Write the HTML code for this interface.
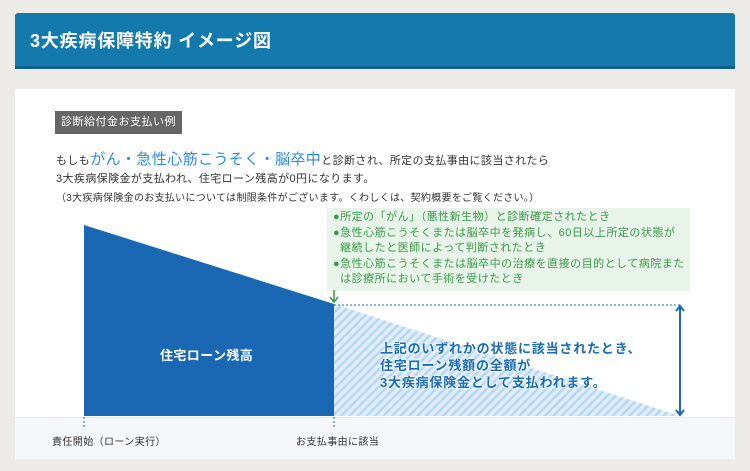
<!DOCTYPE html>
<html><head><meta charset="utf-8"><style>
body{margin:0;width:750px;height:471px;background:#ecebe7;font-family:"Liberation Sans","Noto Sans CJK JP",sans-serif;position:relative;overflow:hidden}
.hd{position:absolute;left:15px;top:13px;width:720px;height:53px;background:#1479ad;border-bottom:3px solid #0e5f8a;border-radius:3px 3px 0 0}
.hd span{position:absolute;left:15px;top:14px;color:#fff;font-size:18px;font-weight:bold;letter-spacing:0.8px}
.pn{position:absolute;left:15px;top:89px;width:720px;height:369px;background:#fff}
.ft{position:absolute;left:15px;top:417px;width:720px;height:41px;background:#f4f7fa;border-top:1px solid #e6e9ec}
.tag{position:absolute;left:55px;top:111px;background:#666;color:#fff;font-size:11px;padding:3px 6px;height:17px;line-height:17px;letter-spacing:0.5px}
.t{position:absolute;font-size:11px;color:#333;white-space:nowrap;letter-spacing:0.4px}
.gb{position:absolute;left:327px;top:208px;width:363px;height:83px;background:#e8f3e9;color:#3a9a47;font-size:11px;line-height:15.5px;padding:2px 0 0 6px;box-sizing:border-box;letter-spacing:0.5px;white-space:nowrap}
.blt{position:absolute;left:380px;top:340px;color:#1a6cb5;font-weight:bold;font-size:13px;line-height:17px;letter-spacing:0.8px;text-shadow:0 0 2px #fff,0 0 2px #fff,0 0 3px #fff;white-space:nowrap}
</style></head><body>
<div class="hd"><span>3大疾病保障特約 イメージ図</span></div>
<div class="pn"></div>
<div class="ft"></div>
<div class="tag">診断給付金お支払い例</div>
<div class="t" style="left:56px;top:148px">もしも<span style="color:#2b8be6;font-size:15px">がん・急性心筋こうそく・脳卒中</span>と診断され、所定の支払事由に該当されたら</div>
<div class="t" style="left:56px;top:170px">3大疾病保険金が支払われ、住宅ローン残高が0円になります。</div>
<div class="t" style="left:56px;top:189px;font-size:10px;letter-spacing:0.3px">（3大疾病保険金のお支払いについては制限条件がございます。くわしくは、契約概要をご覧ください。）</div>
<div class="gb">●所定の「がん」（悪性新生物）と診断確定されたとき<br>●急性心筋こうそくまたは脳卒中を発病し、60日以上所定の状態が<br>&nbsp;&nbsp;継続したと医師によって判断されたとき<br>●急性心筋こうそくまたは脳卒中の治療を直接の目的として病院また<br>&nbsp;&nbsp;は診療所において手術を受けたとき</div>
<svg style="position:absolute;left:0;top:0" width="750" height="471">
<defs><pattern id="h" width="6" height="6" patternUnits="userSpaceOnUse" patternTransform="rotate(45)"><rect width="6" height="6" fill="#dfeefa"/><rect width="2.5" height="6" fill="#b7d6f2"/></pattern></defs>
<polygon points="84,225 334,304 334,416 84,416" fill="#1a68b3"/>
<polygon points="334,304 680,416 334,416" fill="url(#h)"/>
<line x1="334" y1="305" x2="680" y2="305" stroke="#1a68b3" stroke-dasharray="2,2"/>
<line x1="680" y1="307" x2="680" y2="414" stroke="#1a68b3" stroke-width="2"/>
<polyline points="676,311 680,306 684,311" fill="none" stroke="#1a68b3" stroke-width="2"/>
<polyline points="676,410 680,415 684,410" fill="none" stroke="#1a68b3" stroke-width="2"/>
<line x1="334" y1="290" x2="334" y2="302" stroke="#3a9a47" stroke-width="1.5"/>
<polyline points="330,297 334,302 338,297" fill="none" stroke="#3a9a47" stroke-width="1.5"/>
<line x1="84" y1="417" x2="84" y2="427" stroke="#1a68b3" stroke-dasharray="2,2"/>
<line x1="334" y1="417" x2="334" y2="427" stroke="#1a68b3" stroke-dasharray="2,2"/>
</svg>
<div class="t" style="left:160px;top:345px;color:#fff;font-weight:bold;font-size:13px">住宅ローン残高</div>
<div class="blt">上記のいずれかの状態に該当されたとき、<br>住宅ローン残額の全額が<br>3大疾病保険金として支払われます。</div>
<div class="t" style="left:52px;top:433px;font-size:10px">責任開始（ローン実行）</div>
<div class="t" style="left:296px;top:433px;font-size:10px">お支払事由に該当</div>
</body></html>
